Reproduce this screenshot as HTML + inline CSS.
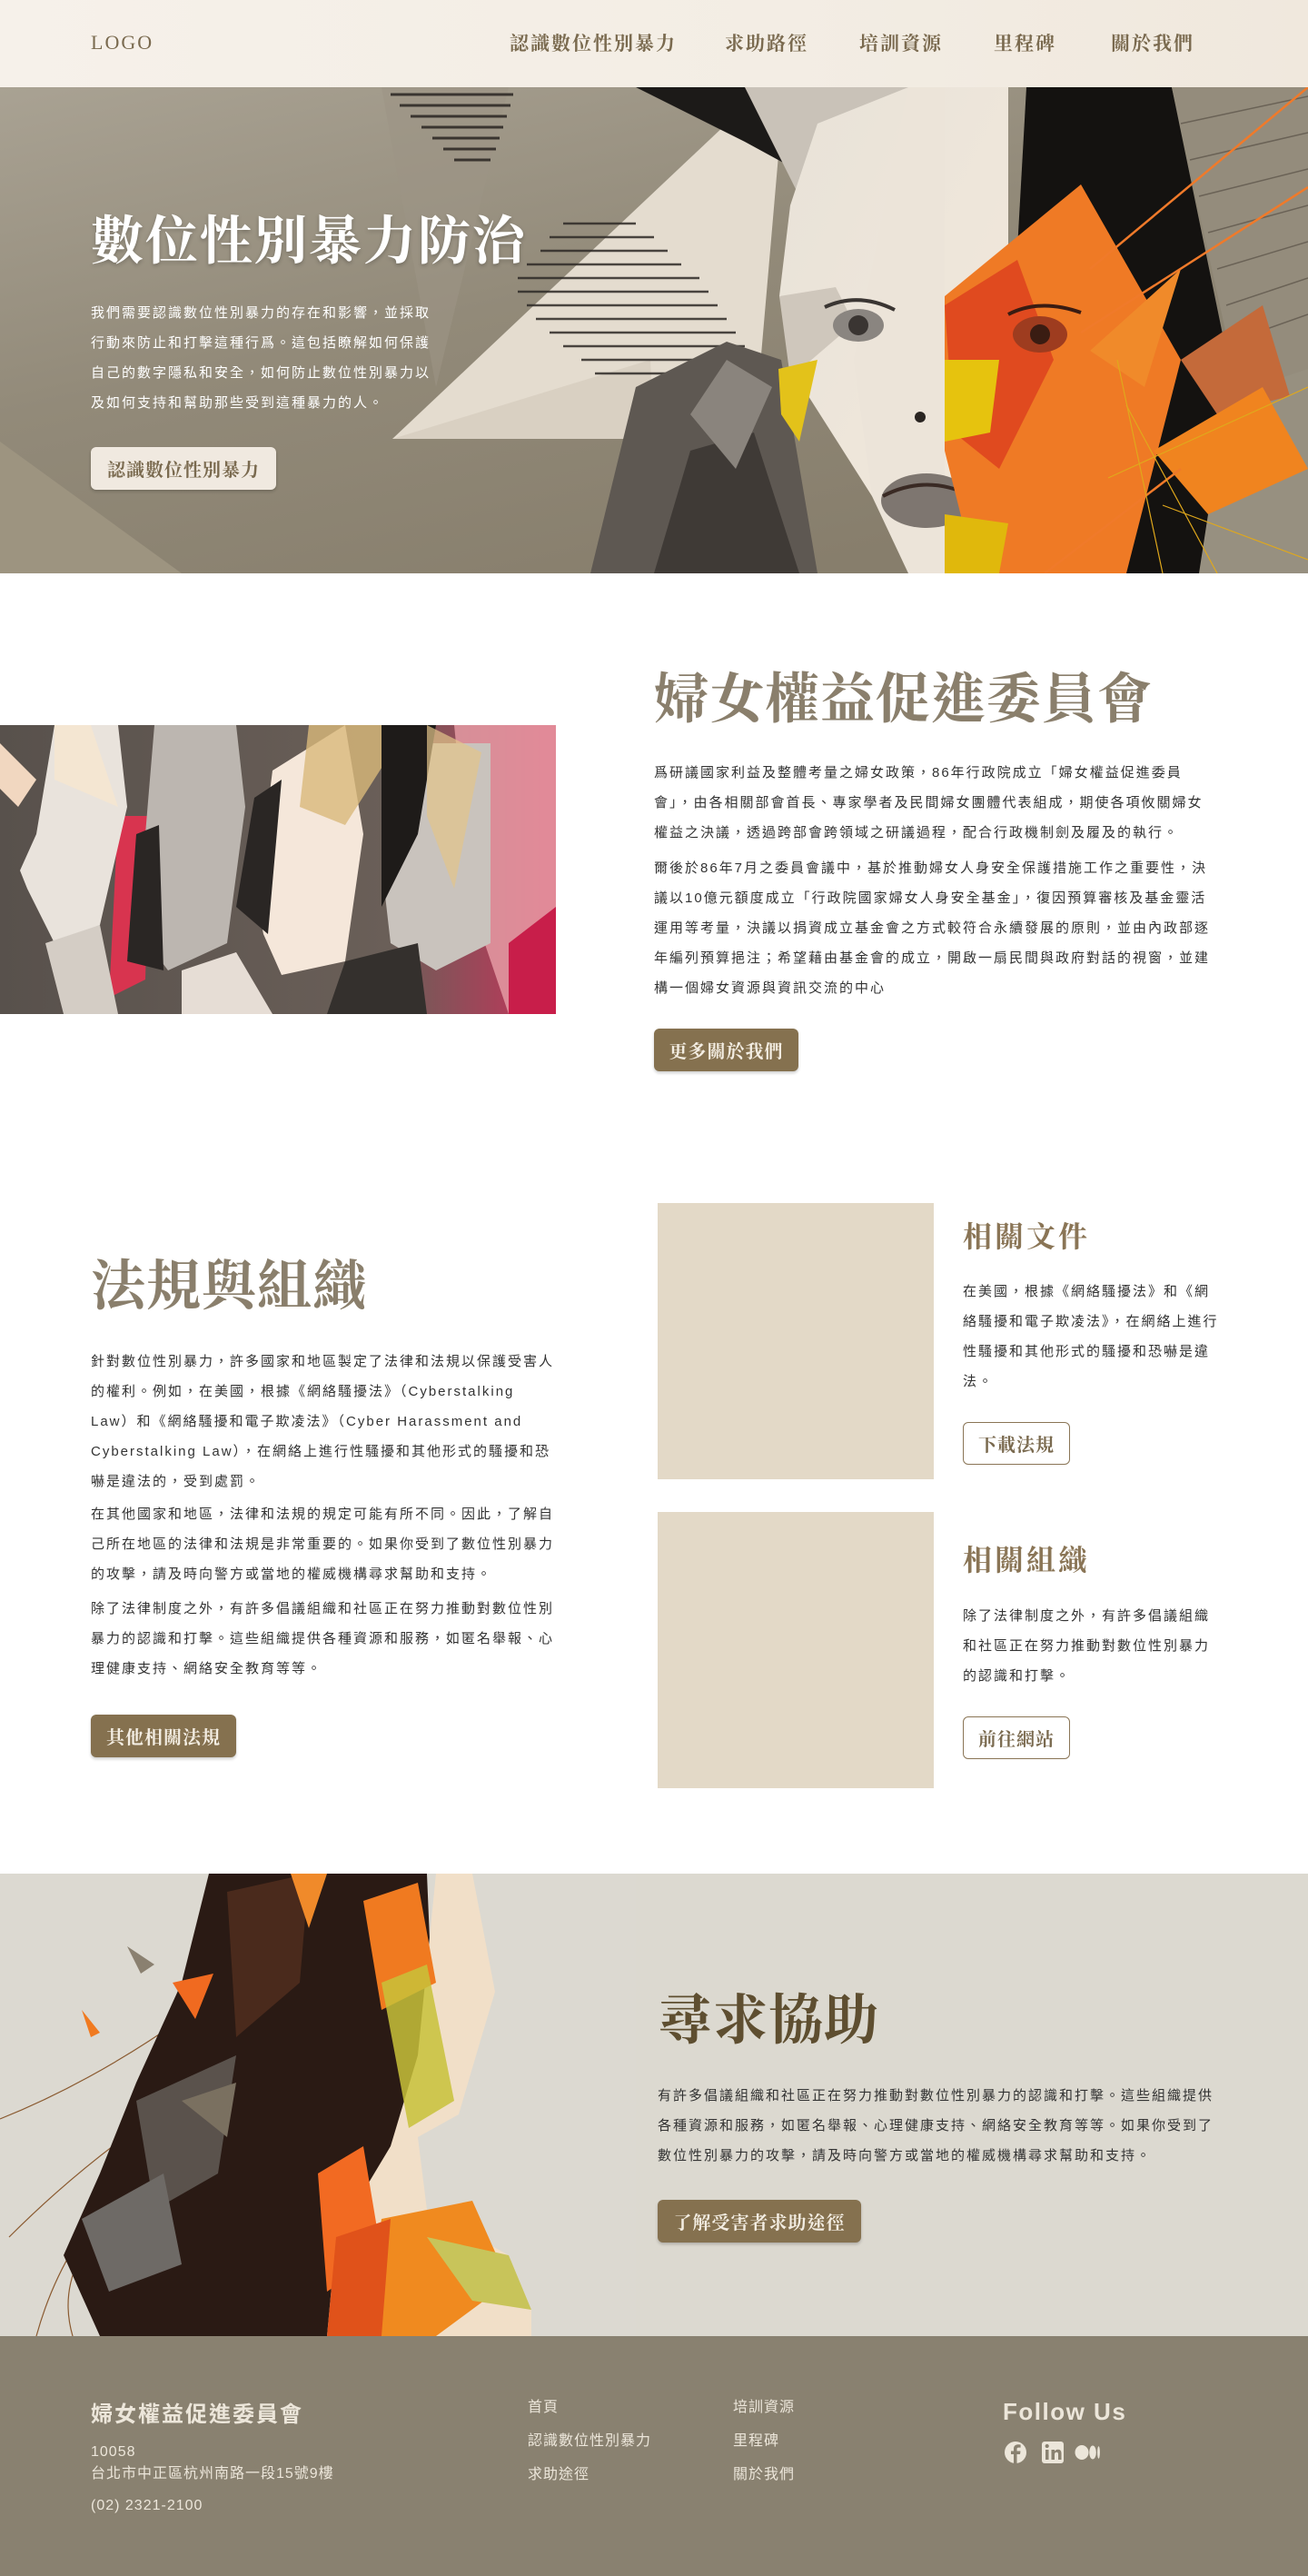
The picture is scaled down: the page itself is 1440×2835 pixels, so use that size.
<!DOCTYPE html>
<html><head><meta charset="utf-8">
<style>
*{margin:0;padding:0;box-sizing:border-box}
body{width:1440px;height:2835px;background:#fff;font-family:"Liberation Sans","Noto Sans CJK TC",sans-serif;color:#2a2a2a;position:relative;overflow:hidden}
.serif{font-family:"Liberation Serif","Noto Serif CJK TC","Noto Serif CJK SC",serif;font-weight:700}
.abs{position:absolute}
nav{position:absolute;left:0;top:0;width:1440px;height:96px;background:linear-gradient(90deg,#f6f1ea,#f3ede4 60%,#f0e8dd)}
nav .logo{left:100px;top:34px;font-size:22px;color:#7a6a4f;letter-spacing:2px;font-weight:400}
nav .it{top:32px;font-size:21px;color:#7a6a4f;letter-spacing:2px}
.p{font-size:15px;line-height:33px;letter-spacing:2px;color:#333}
.btn{position:absolute;border-radius:6px;font-size:20px;letter-spacing:1px;display:flex;align-items:center;justify-content:center}
.bf{background:#85714f;color:#f3ede2;box-shadow:0 2px 3px rgba(0,0,0,.2)}
.bo{border:1.5px solid #8a7556;color:#7a6a4f;background:#fff}
.h2{font-size:60px;color:#8a7f6c;letter-spacing:1px}
.h3{font-size:32px;color:#8a7556;letter-spacing:3px}
footer{position:absolute;left:0;top:2571px;width:1440px;height:264px;background:#898170;color:#ece6da}
footer .l{font-size:16px;letter-spacing:1px}
</style></head><body>

<nav>
<div class="abs logo serif" style="font-weight:400">LOGO</div>
<div class="abs it serif" style="left:561px">認識數位性別暴力</div>
<div class="abs it serif" style="left:798px">求助路徑</div>
<div class="abs it serif" style="left:946px">培訓資源</div>
<div class="abs it serif" style="left:1094px">里程碑</div>
<div class="abs it serif" style="left:1223px">關於我們</div>
</nav>

<!-- HERO -->
<div class="abs" style="left:0;top:96px;width:1440px;height:535px;overflow:hidden">
<svg width="1440" height="535" viewBox="0 0 1440 535">
<defs>
<linearGradient id="hg" x1="0" y1="0" x2="0.6" y2="1"><stop offset="0" stop-color="#a9a293"/><stop offset="0.5" stop-color="#928a79"/><stop offset="1" stop-color="#877e6c"/></linearGradient>
<linearGradient id="fc" x1="0" y1="0" x2="1" y2="1"><stop offset="0" stop-color="#e8e2d8"/><stop offset="1" stop-color="#f3e9dc"/></linearGradient>
</defs>
<rect width="1440" height="535" fill="url(#hg)"/>
<polygon points="0,390 0,535 200,535" fill="#9d9480"/>
<polygon points="420,0 560,0 480,330" fill="#9c9486" opacity=".6"/>
<g stroke="#3a3530" stroke-width="3">
<line x1="430" y1="8" x2="565" y2="8"/><line x1="440" y1="20" x2="562" y2="20"/><line x1="452" y1="32" x2="558" y2="32"/><line x1="464" y1="44" x2="554" y2="44"/><line x1="476" y1="56" x2="550" y2="56"/><line x1="488" y1="68" x2="546" y2="68"/><line x1="500" y1="80" x2="540" y2="80"/>
</g>
<polygon points="432,387 800,40 860,40 830,387" fill="#e4dccf"/>
<polygon points="432,387 716,300 720,387" fill="#d9d0c2"/>
<g stroke="#2e2a27" stroke-width="2.5" opacity=".85">
<line x1="620" y1="150" x2="700" y2="150"/><line x1="605" y1="165" x2="720" y2="165"/><line x1="595" y1="180" x2="735" y2="180"/><line x1="580" y1="195" x2="750" y2="195"/><line x1="570" y1="210" x2="770" y2="210"/><line x1="570" y1="225" x2="780" y2="225"/><line x1="580" y1="240" x2="790" y2="240"/><line x1="590" y1="255" x2="800" y2="255"/><line x1="605" y1="270" x2="810" y2="270"/><line x1="620" y1="285" x2="820" y2="285"/><line x1="640" y1="300" x2="830" y2="300"/><line x1="655" y1="315" x2="830" y2="315"/>
</g>
<polygon points="700,0 1000,0 930,120 820,60" fill="#1c1a18"/>
<polygon points="650,535 700,330 800,280 860,300 900,535" fill="#5e5852"/>
<polygon points="720,535 760,400 830,380 880,535" fill="#3f3a36"/>
<polygon points="760,360 800,300 850,330 810,420" fill="#8a847d"/>
<polygon points="820,0 1010,0 940,140 880,120" fill="#c9c2b8"/>
<polygon points="1130,0 1290,0 1360,340 1330,535 1100,535" fill="#141210"/>
<polygon points="1290,0 1440,0 1440,330 1365,340" fill="#948c7c"/>
<g stroke="#6a6256" stroke-width="1.5">
<line x1="1300" y1="40" x2="1440" y2="10"/><line x1="1310" y1="80" x2="1440" y2="50"/><line x1="1320" y1="120" x2="1440" y2="90"/><line x1="1330" y1="160" x2="1440" y2="130"/><line x1="1340" y1="200" x2="1440" y2="170"/><line x1="1350" y1="240" x2="1440" y2="210"/><line x1="1355" y1="280" x2="1440" y2="250"/>
</g>
<polygon points="1350,340 1440,310 1440,535 1320,535" fill="#979080"/>
<polygon points="900,40 1000,0 1110,0 1110,330 1100,535 1040,535 960,450 890,340 858,230 870,130" fill="url(#fc)"/>
<polygon points="1000,0 1040,0 1040,535 1000,535 960,450 940,300" fill="#ece4d9"/>
<polygon points="858,230 920,220 940,260 870,320" fill="#cfc7bc"/>
<ellipse cx="945" cy="262" rx="28" ry="18" fill="#8a8580"/><circle cx="945" cy="262" r="11" fill="#3a3532"/>
<path d="M908 242 Q945 225 985 245" stroke="#3a3532" stroke-width="4" fill="none"/>
<ellipse cx="1020" cy="455" rx="50" ry="30" fill="#7e7670"/>
<path d="M972 450 Q1020 425 1070 450" stroke="#3a2a24" stroke-width="4" fill="none"/>
<circle cx="1013" cy="363" r="6" fill="#2a2522"/>
<polygon points="1040,230 1190,107 1300,300 1240,535 1100,535 1060,480 1040,400" fill="#ef7a25"/>
<polygon points="1040,240 1120,190 1160,300 1100,420 1050,380" fill="#e04a1f"/>
<ellipse cx="1145" cy="272" rx="30" ry="20" fill="#9e3c1f"/><circle cx="1145" cy="272" r="11" fill="#3a1c12"/>
<path d="M1110 250 Q1145 232 1190 248" stroke="#3a1c12" stroke-width="4" fill="none"/>
<polygon points="857,310 900,300 880,390 860,360" fill="#e3c21a"/>
<polygon points="1040,300 1100,300 1090,380 1040,390" fill="#e6c30e"/>
<polygon points="1040,470 1110,480 1100,535 1040,535" fill="#e0b80c"/>
<polygon points="1200,290 1300,200 1260,330" fill="#f08a2a"/>
<polygon points="1300,300 1390,240 1420,340 1340,360" fill="#c46a3a"/>
<polygon points="1270,400 1390,330 1440,420 1330,470" fill="#f0841f"/>
<g stroke="#f07a2a" stroke-width="2.5"><line x1="1200" y1="200" x2="1440" y2="0"/><line x1="1190" y1="270" x2="1440" y2="110"/><line x1="1150" y1="535" x2="1300" y2="420"/></g>
<g stroke="#e0a81c" stroke-width="1.2" fill="none"><path d="M1240 350 L1340 535"/><path d="M1220 430 L1440 330"/><path d="M1280 460 L1440 520"/><path d="M1230 300 L1280 535"/></g>
</svg>
<div class="abs serif" style="left:100px;top:122px;font-size:58px;color:#fff;letter-spacing:2px;text-shadow:0 2px 4px rgba(0,0,0,.25)">數位性別暴力防治</div>
<div class="abs" style="left:100px;top:232px;width:385px;font-size:15px;line-height:33px;color:#fff;letter-spacing:2px">我們需要認識數位性別暴力的存在和影響，並採取行動來防止和打擊這種行爲。這包括瞭解如何保護自己的數字隱私和安全，如何防止數位性別暴力以及如何支持和幫助那些受到這種暴力的人。</div>
<div class="btn serif" style="left:100px;top:396px;width:204px;height:47px;background:#f0e9e0;color:#7a6a4f;box-shadow:0 2px 3px rgba(0,0,0,.2)">認識數位性別暴力</div>
</div>

<!-- SECTION 2 -->
<div class="abs" style="left:0;top:798px;width:612px;height:318px;overflow:hidden">
<svg width="612" height="318" viewBox="0 0 612 318">
<defs><linearGradient id="s2" x1="0" x2="1"><stop offset="0" stop-color="#58514c"/><stop offset=".7" stop-color="#6a5f58"/><stop offset="1" stop-color="#c8325a"/></linearGradient></defs>
<rect width="612" height="318" fill="url(#s2)"/>
<polygon points="500,0 612,0 612,318 560,318 520,200" fill="#e8a0a8" opacity=".8"/>
<polygon points="560,240 612,200 612,318 560,318" fill="#c81e4a"/>
<polygon points="130,100 165,100 160,280 120,300" fill="#d8344f"/>
<polygon points="60,0 130,0 140,90 110,220 60,240 30,180 22,160 40,120" fill="#e9e3dc"/>
<polygon points="60,0 100,0 130,90 60,60" fill="#f4e6d2"/>
<polygon points="50,240 110,220 130,318 70,318" fill="#d4cdc5"/>
<polygon points="170,0 260,0 270,90 250,240 185,270 155,230 147,165 160,120" fill="#bcb6b0"/>
<polygon points="150,120 175,110 180,270 140,260" fill="#2a2624"/>
<polygon points="300,50 380,0 400,120 380,260 310,275 290,230 278,170 290,130" fill="#f5e7da"/>
<polygon points="280,80 310,60 295,230 260,200" fill="#2a2624"/>
<polygon points="340,0 450,0 380,110 330,90" fill="#d9b97a" opacity=".8"/>
<polygon points="470,20 540,20 540,240 480,270 430,240 422,170 440,120" fill="#c9c3bd"/>
<polygon points="420,0 480,0 460,120 420,200" fill="#1e1b19"/>
<polygon points="470,0 530,30 500,180 470,100" fill="#e3c58a" opacity=".7"/>
<polygon points="380,260 460,240 470,318 360,318" fill="#34302d"/>
<polygon points="200,270 260,250 300,318 200,318" fill="#e6ddd5"/>
<polygon points="0,20 40,60 20,90 0,70" fill="#f1d7c0"/>
</svg>
</div>
<div class="abs serif h2" style="left:720px;top:722px">婦女權益促進委員會</div>
<div class="abs p" style="left:720px;top:834px;width:612px">爲研議國家利益及整體考量之婦女政策，86年行政院成立「婦女權益促進委員會」，由各相關部會首長、專家學者及民間婦女團體代表組成，期使各項攸關婦女權益之決議，透過跨部會跨領域之研議過程，配合行政機制劍及履及的執行。</div>
<div class="abs p" style="left:720px;top:939px;width:612px">爾後於86年7月之委員會議中，基於推動婦女人身安全保護措施工作之重要性，決議以10億元額度成立「行政院國家婦女人身安全基金」，復因預算審核及基金靈活運用等考量，決議以捐資成立基金會之方式較符合永續發展的原則，並由內政部逐年編列預算挹注；希望藉由基金會的成立，開啟一扇民間與政府對話的視窗，並建構一個婦女資源與資訊交流的中心</div>
<div class="btn bf serif" style="left:720px;top:1132px;width:159px;height:47px">更多關於我們</div>

<!-- SECTION 3 -->
<div class="abs serif h2" style="left:100px;top:1368px">法規與組織</div>
<div class="abs p" style="left:100px;top:1482px;width:512px">針對數位性別暴力，許多國家和地區製定了法律和法規以保護受害人的權利。例如，在美國，根據《網絡騷擾法》（Cyberstalking Law）和《網絡騷擾和電子欺凌法》（Cyber Harassment and Cyberstalking Law），在網絡上進行性騷擾和其他形式的騷擾和恐嚇是違法的，受到處罰。</div>
<div class="abs p" style="left:100px;top:1650px;width:512px">在其他國家和地區，法律和法規的規定可能有所不同。因此，了解自己所在地區的法律和法規是非常重要的。如果你受到了數位性別暴力的攻擊，請及時向警方或當地的權威機構尋求幫助和支持。</div>
<div class="abs p" style="left:100px;top:1754px;width:512px">除了法律制度之外，有許多倡議組織和社區正在努力推動對數位性別暴力的認識和打擊。這些組織提供各種資源和服務，如匿名舉報、心理健康支持、網絡安全教育等等。</div>
<div class="btn bf serif" style="left:100px;top:1887px;width:160px;height:47px">其他相關法規</div>

<div class="abs" style="left:724px;top:1324px;width:304px;height:304px;background:#e3d9c7"></div>
<div class="abs serif h3" style="left:1060px;top:1336px">相關文件</div>
<div class="abs p" style="left:1060px;top:1405px;width:282px">在美國，根據《網絡騷擾法》和《網絡騷擾和電子欺凌法》，在網絡上進行性騷擾和其他形式的騷擾和恐嚇是違法。</div>
<div class="btn bo serif" style="left:1060px;top:1565px;width:118px;height:47px">下載法規</div>

<div class="abs" style="left:724px;top:1664px;width:304px;height:304px;background:#e3d9c7"></div>
<div class="abs serif h3" style="left:1060px;top:1692px">相關組織</div>
<div class="abs p" style="left:1060px;top:1762px;width:282px">除了法律制度之外，有許多倡議組織和社區正在努力推動對數位性別暴力的認識和打擊。</div>
<div class="btn bo serif" style="left:1060px;top:1889px;width:118px;height:47px">前往網站</div>

<!-- SECTION 4 -->
<div class="abs" style="left:0;top:2062px;width:1440px;height:509px;background:#dcd9d0;overflow:hidden">
<svg width="700" height="509" viewBox="0 0 700 509">
<rect width="700" height="509" fill="#dcd9d1"/>
<g stroke="#8a5a30" stroke-width="1.2" fill="none">
<path d="M200 160 Q100 230 0 270"/><path d="M180 260 Q90 320 10 400"/><path d="M150 330 Q70 400 40 509"/><path d="M120 380 Q60 440 80 509"/>
</g>
<polygon points="230,0 470,0 480,240 430,330 440,400 400,509 110,509 70,420 110,330 150,230 200,120" fill="#2a1a14"/>
<polygon points="250,20 340,0 330,120 260,180" fill="#4a2a1c"/>
<polygon points="150,250 260,200 240,330 170,370" fill="#5a524c"/>
<polygon points="90,380 180,330 200,430 120,460" fill="#6e6a66"/>
<polygon points="480,0 520,0 545,130 530,180 505,265 460,290 470,370 560,420 585,480 585,509 360,509 370,400 430,300 460,200" fill="#f1dfc8"/>
<polygon points="400,30 460,10 480,120 420,150" fill="#f07a20"/>
<polygon points="420,120 470,100 500,250 450,280" fill="#c8c23a" opacity=".85"/>
<polygon points="420,380 520,360 560,450 480,509 400,509" fill="#f08a1f"/>
<polygon points="470,400 560,420 585,480 520,470" fill="#c8c45a"/>
<polygon points="350,330 400,300 420,420 360,460" fill="#f26a22"/>
<polygon points="370,400 430,380 420,509 360,509" fill="#e0521a"/>
<polygon points="190,120 235,110 215,160" fill="#f06a20"/>
<polygon points="200,250 260,230 250,290" fill="#7a7060"/>
<polygon points="140,80 170,100 155,110" fill="#8a8070"/>
<polygon points="90,150 110,175 100,180" fill="#f07a20"/>
<polygon points="320,0 360,0 340,60" fill="#f08a2a"/>
</svg>
<div class="abs serif" style="left:724px;top:114px;font-size:60px;color:#5e4e30;letter-spacing:1px">尋求協助</div>
<div class="abs p" style="left:724px;top:228px;width:620px">有許多倡議組織和社區正在努力推動對數位性別暴力的認識和打擊。這些組織提供各種資源和服務，如匿名舉報、心理健康支持、網絡安全教育等等。如果你受到了數位性別暴力的攻擊，請及時向警方或當地的權威機構尋求幫助和支持。</div>
<div class="btn bf serif" style="left:724px;top:359px;width:224px;height:47px">了解受害者求助途徑</div>
</div>

<footer>
<div class="abs" style="left:100px;top:66px;font-size:24px;font-weight:700;letter-spacing:2px">婦女權益促進委員會</div>
<div class="abs l" style="left:100px;top:116px;line-height:24px">10058<br>台北市中正區杭州南路一段15號9樓</div>
<div class="abs l" style="left:100px;top:178px">(02) 2321-2100</div>
<div class="abs l" style="left:581px;top:64px">首頁</div>
<div class="abs l" style="left:581px;top:101px">認識數位性別暴力</div>
<div class="abs l" style="left:581px;top:138px">求助途徑</div>
<div class="abs l" style="left:807px;top:64px">培訓資源</div>
<div class="abs l" style="left:807px;top:101px">里程碑</div>
<div class="abs l" style="left:807px;top:138px">關於我們</div>
<div class="abs" style="left:1104px;top:68px;font-size:26px;font-weight:700;letter-spacing:1.5px">Follow Us</div>
<svg class="abs" style="left:1106px;top:115px" width="120" height="26" viewBox="0 0 120 26">
<circle cx="12" cy="13" r="12" fill="#ece6da"/>
<path d="M13.5 25 V15 H17 L17.5 11.5 H13.5 V9.3 C13.5 8.3 13.9 7.6 15.3 7.6 H17.6 V4.5 C17 4.4 15.9 4.3 14.7 4.3 C11.8 4.3 10 6 10 9 V11.5 H7 V15 H10 V25 Z" fill="#898170"/>
<rect x="41" y="1" width="24" height="24" rx="3" fill="#ece6da"/>
<rect x="45" y="10" width="3.5" height="11" fill="#898170"/><circle cx="46.7" cy="6" r="2.1" fill="#898170"/>
<path d="M51.5 10 H55 V11.8 C55.7 10.6 57 9.7 58.8 9.7 C61.5 9.7 62.5 11.4 62.5 14.3 V21 H59 V15 C59 13.6 58.6 12.7 57.3 12.7 C56 12.7 55 13.6 55 15.2 V21 H51.5 Z" fill="#898170"/>
<ellipse cx="85" cy="13" rx="7.5" ry="8" fill="#ece6da"/><ellipse cx="97" cy="13" rx="3.8" ry="7.5" fill="#ece6da"/><ellipse cx="103.5" cy="13" rx="1.4" ry="6.8" fill="#ece6da"/>
</svg>
</footer>
</body></html>
